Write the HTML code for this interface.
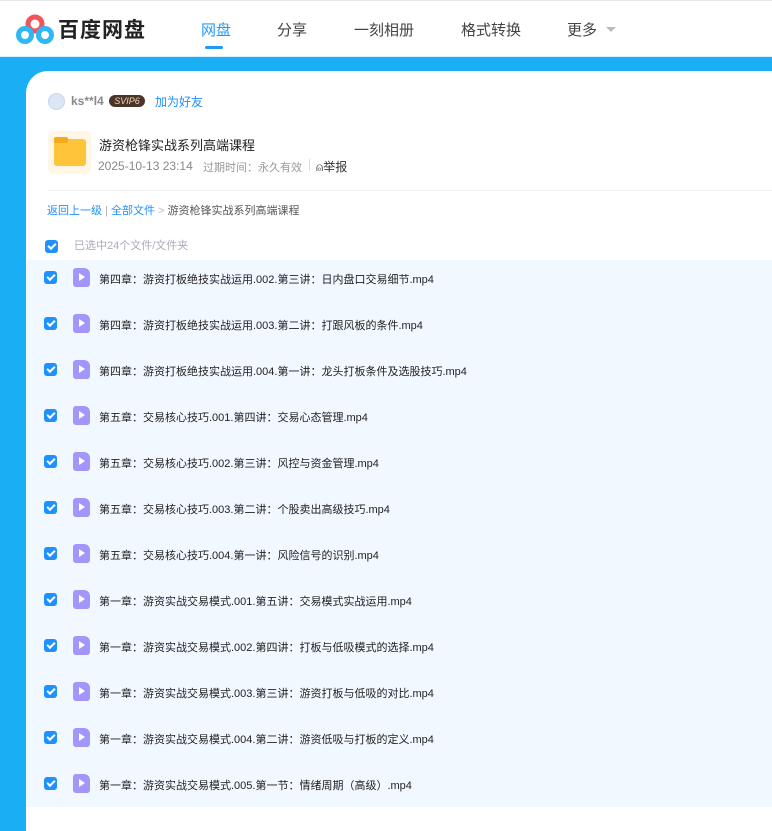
<!DOCTYPE html>
<html><head><meta charset="utf-8"><style>
*{margin:0;padding:0;box-sizing:border-box}
body{width:772px;height:816px;overflow:hidden;background:#1aaef5;font-family:"Liberation Sans","Noto Sans CJK SC",sans-serif;position:relative}
.hdr{position:absolute;left:0;top:0;width:772px;height:57px;background:#fff;border-top:1px solid #e6e8ec;border-bottom:1px solid #d8eefa}
.logo{position:absolute;left:58px;top:13px;font-size:21px;font-weight:bold;color:#222;letter-spacing:1px}
.nav{position:absolute;top:18px;font-size:15px;color:#444}
.card{position:absolute;left:26px;top:71px;width:760px;height:760px;background:#fff;border-top-left-radius:22px}
.abs{position:absolute}
.list{position:absolute;left:26px;top:260px;width:746px;height:547px;background:#f2f8ff}
.row{position:absolute;left:0;height:20px;width:746px}
.cb{position:absolute;left:18px;top:3px;width:13px;height:13px;border-radius:3px;background:#1e90ff}
.cb:after{content:"";position:absolute;left:3px;top:2.5px;width:6px;height:3px;border-left:2px solid #fff;border-bottom:2px solid #fff;transform:rotate(-45deg)}
.fi{position:absolute;left:47px;top:0;width:17px;height:19px;background:#a296fa;border-radius:3px;border-top-right-radius:6px}
.fi:after{content:"";position:absolute;left:6px;top:5px;border-left:6px solid #fff;border-top:4.5px solid transparent;border-bottom:4.5px solid transparent}
.t{position:absolute;left:73px;top:3px;font-size:11px;color:#222;white-space:nowrap}
</style></head><body>
<div class="hdr">
<svg class="abs" style="left:16px;top:13px" width="38" height="32" viewBox="0 0 38 32"><circle cx="19" cy="10" r="7" fill="none" stroke="#f2545b" stroke-width="5"/><circle cx="9" cy="21" r="6.5" fill="none" stroke="#2fb8f5" stroke-width="5"/><circle cx="29" cy="21" r="6.5" fill="none" stroke="#2fb8f5" stroke-width="5"/></svg>
<div class="logo">百度网盘</div>
<div class="nav" style="left:201px;color:#1e9bfa">网盘</div>
<div class="abs" style="left:205px;top:45px;width:18px;height:3px;border-radius:2px;background:#1e9bfa"></div>
<div class="nav" style="left:277px">分享</div>
<div class="nav" style="left:354px">一刻相册</div>
<div class="nav" style="left:461px">格式转换</div>
<div class="nav" style="left:567px">更多</div>
<div class="abs" style="left:606px;top:26px;border-top:5px solid #bbb;border-left:5px solid transparent;border-right:5px solid transparent"></div>
</div>
<div class="card"></div>
<div class="abs" style="left:48px;top:93px;width:17px;height:17px;border-radius:50%;background:#dde6f4;border:1px solid #c8d6ee"></div>
<div class="abs" style="left:71px;top:94px;font-size:12px;color:#888;font-weight:bold">ks**l4</div>
<div class="abs" style="left:109px;top:95px;width:36px;height:12px;border-radius:6px;background:#4a352c;color:#f5d9b0;font-size:9px;font-style:italic;text-align:center;line-height:12px">SVIP6</div>
<div class="abs" style="left:155px;top:93px;font-size:12px;color:#1e90ff">加为好友</div>
<div class="abs" style="left:48px;top:131px;width:43px;height:43px;border-radius:6px;background:#fff6e6"></div>
<div class="abs" style="left:54px;top:139px;width:32px;height:27px;border-radius:3px;background:#ffc53a"></div>
<div class="abs" style="left:54px;top:137px;width:14px;height:6px;border-radius:2px;background:#f4ac1c"></div>
<div class="abs" style="left:99px;top:135px;font-size:13px;color:#222">游资枪锋实战系列高端课程</div>
<div class="abs" style="left:98px;top:159px;font-size:12px;color:#888">2025-10-13 23:14</div>
<div class="abs" style="left:203px;top:159px;font-size:11px;color:#999">过期时间：永久有效</div>
<div class="abs" style="left:309px;top:159px;width:1px;height:12px;background:#ddd"></div>
<div class="abs" style="left:316px;top:158px;font-size:12px;color:#333">⍝举报</div>
<div class="abs" style="left:48px;top:190px;width:724px;height:1px;background:#eef0f3"></div>
<div class="abs" style="left:47px;top:202px;font-size:11px;color:#1e90ff">返回上一级 <span style="color:#aac">|</span> 全部文件 <span style="color:#bbb">&gt;</span> <span style="color:#555">游资枪锋实战系列高端课程</span></div>
<div class="abs" style="left:18px;top:237px;width:746px"><div class="cb" style="left:27px"></div></div>
<div class="abs" style="left:74px;top:237px;font-size:11px;color:#aab">已选中24个文件/文件夹</div>
<div class="list">
<div class="row" style="top:8px"><div class="cb"></div><div class="fi"></div><div class="t">第四章：游资打板绝技实战运用.002.第三讲：日内盘口交易细节.mp4</div></div>
<div class="row" style="top:54px"><div class="cb"></div><div class="fi"></div><div class="t">第四章：游资打板绝技实战运用.003.第二讲：打跟风板的条件.mp4</div></div>
<div class="row" style="top:100px"><div class="cb"></div><div class="fi"></div><div class="t">第四章：游资打板绝技实战运用.004.第一讲：龙头打板条件及选股技巧.mp4</div></div>
<div class="row" style="top:146px"><div class="cb"></div><div class="fi"></div><div class="t">第五章：交易核心技巧.001.第四讲：交易心态管理.mp4</div></div>
<div class="row" style="top:192px"><div class="cb"></div><div class="fi"></div><div class="t">第五章：交易核心技巧.002.第三讲：风控与资金管理.mp4</div></div>
<div class="row" style="top:238px"><div class="cb"></div><div class="fi"></div><div class="t">第五章：交易核心技巧.003.第二讲：个股卖出高级技巧.mp4</div></div>
<div class="row" style="top:284px"><div class="cb"></div><div class="fi"></div><div class="t">第五章：交易核心技巧.004.第一讲：风险信号的识别.mp4</div></div>
<div class="row" style="top:330px"><div class="cb"></div><div class="fi"></div><div class="t">第一章：游资实战交易模式.001.第五讲：交易模式实战运用.mp4</div></div>
<div class="row" style="top:376px"><div class="cb"></div><div class="fi"></div><div class="t">第一章：游资实战交易模式.002.第四讲：打板与低吸模式的选择.mp4</div></div>
<div class="row" style="top:422px"><div class="cb"></div><div class="fi"></div><div class="t">第一章：游资实战交易模式.003.第三讲：游资打板与低吸的对比.mp4</div></div>
<div class="row" style="top:468px"><div class="cb"></div><div class="fi"></div><div class="t">第一章：游资实战交易模式.004.第二讲：游资低吸与打板的定义.mp4</div></div>
<div class="row" style="top:514px"><div class="cb"></div><div class="fi"></div><div class="t">第一章：游资实战交易模式.005.第一节：情绪周期（高级）.mp4</div></div>
</div>
</body></html>
